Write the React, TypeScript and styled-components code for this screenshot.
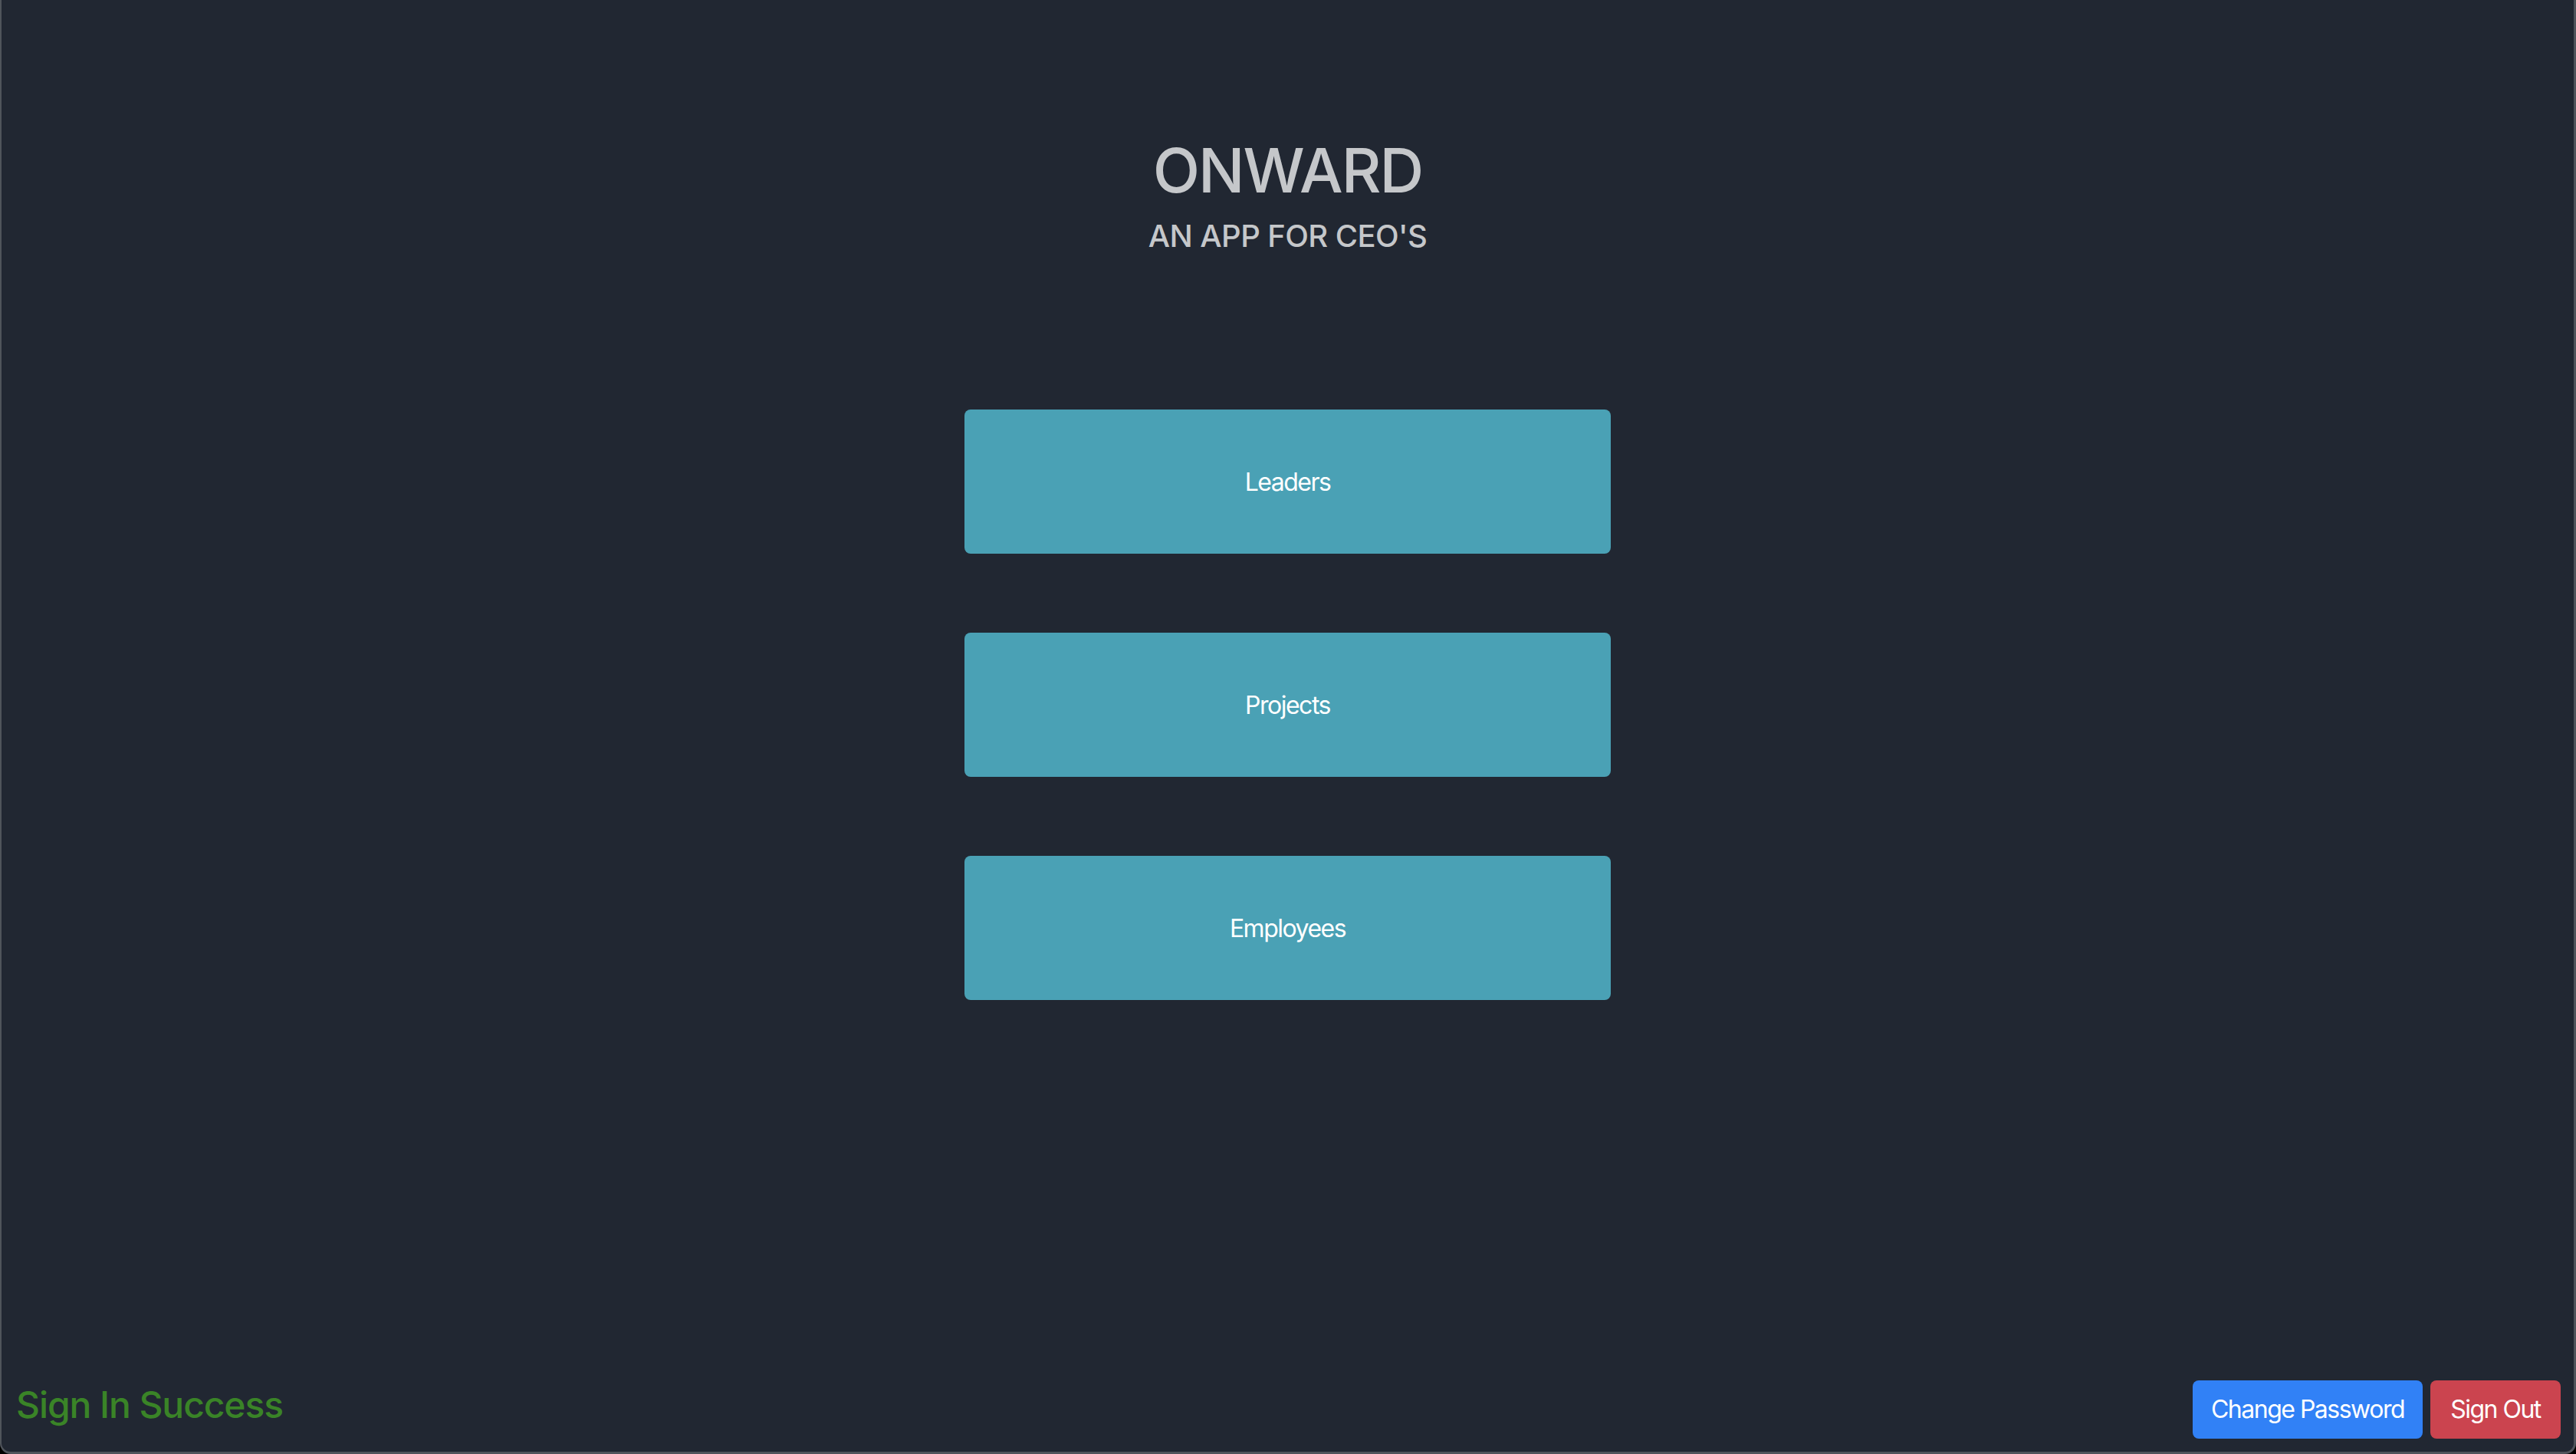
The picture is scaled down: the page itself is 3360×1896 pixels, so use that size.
import React from "react";
import styled, { createGlobalStyle } from "styled-components";

const GlobalStyle = createGlobalStyle`
  html, body {
    margin: 0;
    padding: 0;
    background: #000000;
  }
  * { box-sizing: border-box; }
`;

const Window = styled.div`
  width: 3360px;
  height: 1896px;
  background: #212732;
  border-left: 2px solid #4f545b;
  border-right: 3px solid #4f545b;
  border-bottom: 3px solid #4f545b;
  border-bottom-left-radius: 14px;
  border-bottom-right-radius: 14px;
  display: flex;
  flex-direction: column;
  font-family: Inter, "Noto Sans", "Liberation Sans", sans-serif;
`;

const Header = styled.header`
  padding-top: 174px;
  display: flex;
  flex-direction: column;
  align-items: center;
  color: #c5c7ca;
`;

const Title = styled.h1`
  margin: 0;
  font-size: 80px;
  font-weight: 500;
  line-height: 1.2;
  letter-spacing: -2px;
`;

const Subtitle = styled.h5`
  margin: 14px 0 0;
  font-size: 40px;
  font-weight: 500;
  line-height: 1.2;
  letter-spacing: -0.6px;
`;

const Menu = styled.nav`
  margin-top: 202px;
  display: flex;
  flex-direction: column;
  align-items: center;
  gap: 103px;
  flex: 1;
`;

const MenuButton = styled.button`
  width: 843px;
  height: 188px;
  border: none;
  border-radius: 8px;
  background: #4aa1b5;
  color: #ffffff;
  font-family: inherit;
  font-size: 32px;
  font-weight: 400;
  letter-spacing: -1.5px;
  cursor: pointer;
`;

const Footer = styled.footer`
  display: flex;
  justify-content: space-between;
  align-items: baseline;
  padding: 0 17px 17px 19px;
`;

const Status = styled.span<{ $tone: string }>`
  color: ${(p) => p.$tone};
  font-size: 48px;
  line-height: 1.2;
  font-weight: 450;
  letter-spacing: -1.1px;
`;

const Actions = styled.div`
  display: flex;
  gap: 10px;
  align-items: baseline;
`;

const ActionButton = styled.button<{ $bg: string; $w: number }>`
  width: ${(p) => p.$w}px;
  height: 76px;
  border: none;
  border-radius: 8px;
  background: ${(p) => p.$bg};
  color: #ffffff;
  font-family: inherit;
  font-size: 32px;
  line-height: 1.5;
  letter-spacing: -1.5px;
  padding: 12px 0;
  cursor: pointer;
`;

export default function App() {
  return (
    <>
      <GlobalStyle />
      <Window>
        <Header>
          <Title>ONWARD</Title>
          <Subtitle>AN APP FOR CEO'S</Subtitle>
        </Header>
        <Menu>
          <MenuButton>Leaders</MenuButton>
          <MenuButton>Projects</MenuButton>
          <MenuButton>Employees</MenuButton>
        </Menu>
        <Footer>
          <Status $tone="#3a8427">Sign In Success</Status>
          <Actions>
            <ActionButton $bg="#3181f6" $w={300}>Change Password</ActionButton>
            <ActionButton $bg="#cb444f" $w={170}>Sign Out</ActionButton>
          </Actions>
        </Footer>
      </Window>
    </>
  );
}
